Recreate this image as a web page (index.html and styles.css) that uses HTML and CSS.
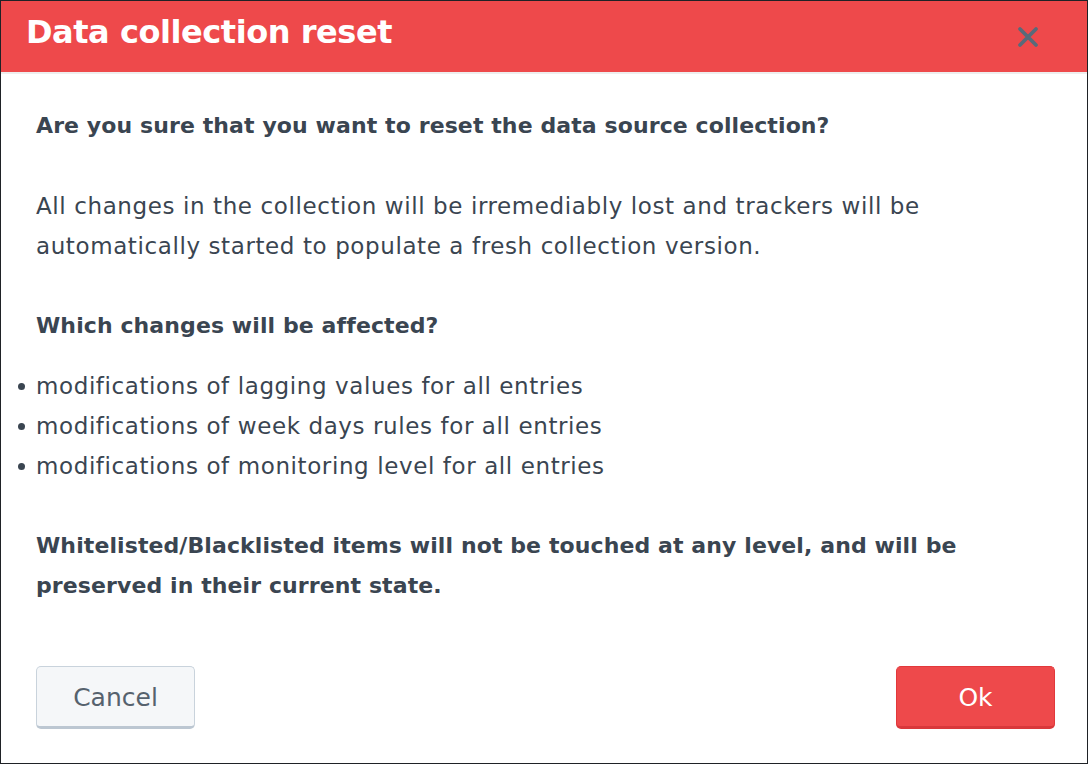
FILE: index.html
```html
<!DOCTYPE html>
<html>
<head>
<meta charset="utf-8">
<link rel="stylesheet" href="styles.css">
</head>
<body>
<div class="dialog">
  <div class="header">
    <h1 class="title">Data collection reset</h1>
    <button class="close" aria-label="Close">
      <svg width="22" height="22" viewBox="0 0 22 22"><path d="M3 3 L19 19 M19 3 L3 19" stroke="#586a7a" stroke-width="3.8" stroke-linecap="round"/></svg>
    </button>
  </div>
  <div class="content">
    <p class="strong q">Are you sure that you want to reset the data source collection?</p>
    <p class="text">All changes in the collection will be irremediably lost and trackers will be automatically started to populate a fresh collection version.</p>
    <p class="strong which">Which changes will be affected?</p>
    <ul class="list">
      <li>modifications of lagging values for all entries</li>
      <li>modifications of week days rules for all entries</li>
      <li>modifications of monitoring level for all entries</li>
    </ul>
    <p class="strong note">Whitelisted/Blacklisted items will not be touched at any level, and will be preserved in their current state.</p>
  </div>
  <div class="footer">
    <button class="btn cancel">Cancel</button>
    <button class="btn ok">Ok</button>
  </div>
</div>
</body>
</html>
```
FILE: styles.css
```css
* { box-sizing: border-box; }
html, body { margin: 0; padding: 0; background: #fff; }
body { font-family: "DejaVu Sans", sans-serif; color: #3a4551; }
.dialog {
  width: 1088px; height: 764px;
  border: 1px solid #1f2226;
  display: flex; flex-direction: column;
  background: #fff;
}
.header {
  height: 73px;
  background: #ee494b;
  border-bottom: 2px solid #eeeeee;
  display: flex; align-items: center; justify-content: space-between;
  padding: 0 48px 0 25px;
}
.title {
  margin: 0 0 10px 0; color: #fff;
  font-size: 32px; font-weight: 700; letter-spacing: -0.45px;
}
.close { background: none; border: 0; padding: 0; width: 22px; height: 22px; display: flex; }
.content { padding: 32px 35px 0 35px; font-size: 23px; line-height: 40px; letter-spacing: 0.6px; }
.content p { margin: 0; }
.strong { font-weight: 700; font-size: 22px; letter-spacing: 0.1px; }
.text { margin-top: 40px !important; }
.which { margin-top: 40px !important; }
.list { margin: 20px 0 0 0; padding: 0; list-style: none; }
.list li { position: relative; }
.list li::before {
  content: ""; position: absolute; left: -18px; top: 17px;
  width: 7px; height: 7px; border-radius: 50%; background: #3a4551;
}
.note { margin-top: 40px !important; }
.footer { margin-top: auto; display: flex; justify-content: space-between; padding: 0 32px 34px 35px; }
.btn {
  width: 159px; height: 63px; border-radius: 5px;
  font-family: inherit; font-size: 25px; padding: 2px 0 0 0;
}
.cancel {
  background: #f5f7f9; color: #56626e;
  border: 1px solid #c9d3dc; border-bottom: 3px solid #bcc7d2;
}
.ok {
  background: #ee494b; color: #fff;
  border: 1px solid #e2383b; border-bottom: 3px solid #d9383b;
}
```
